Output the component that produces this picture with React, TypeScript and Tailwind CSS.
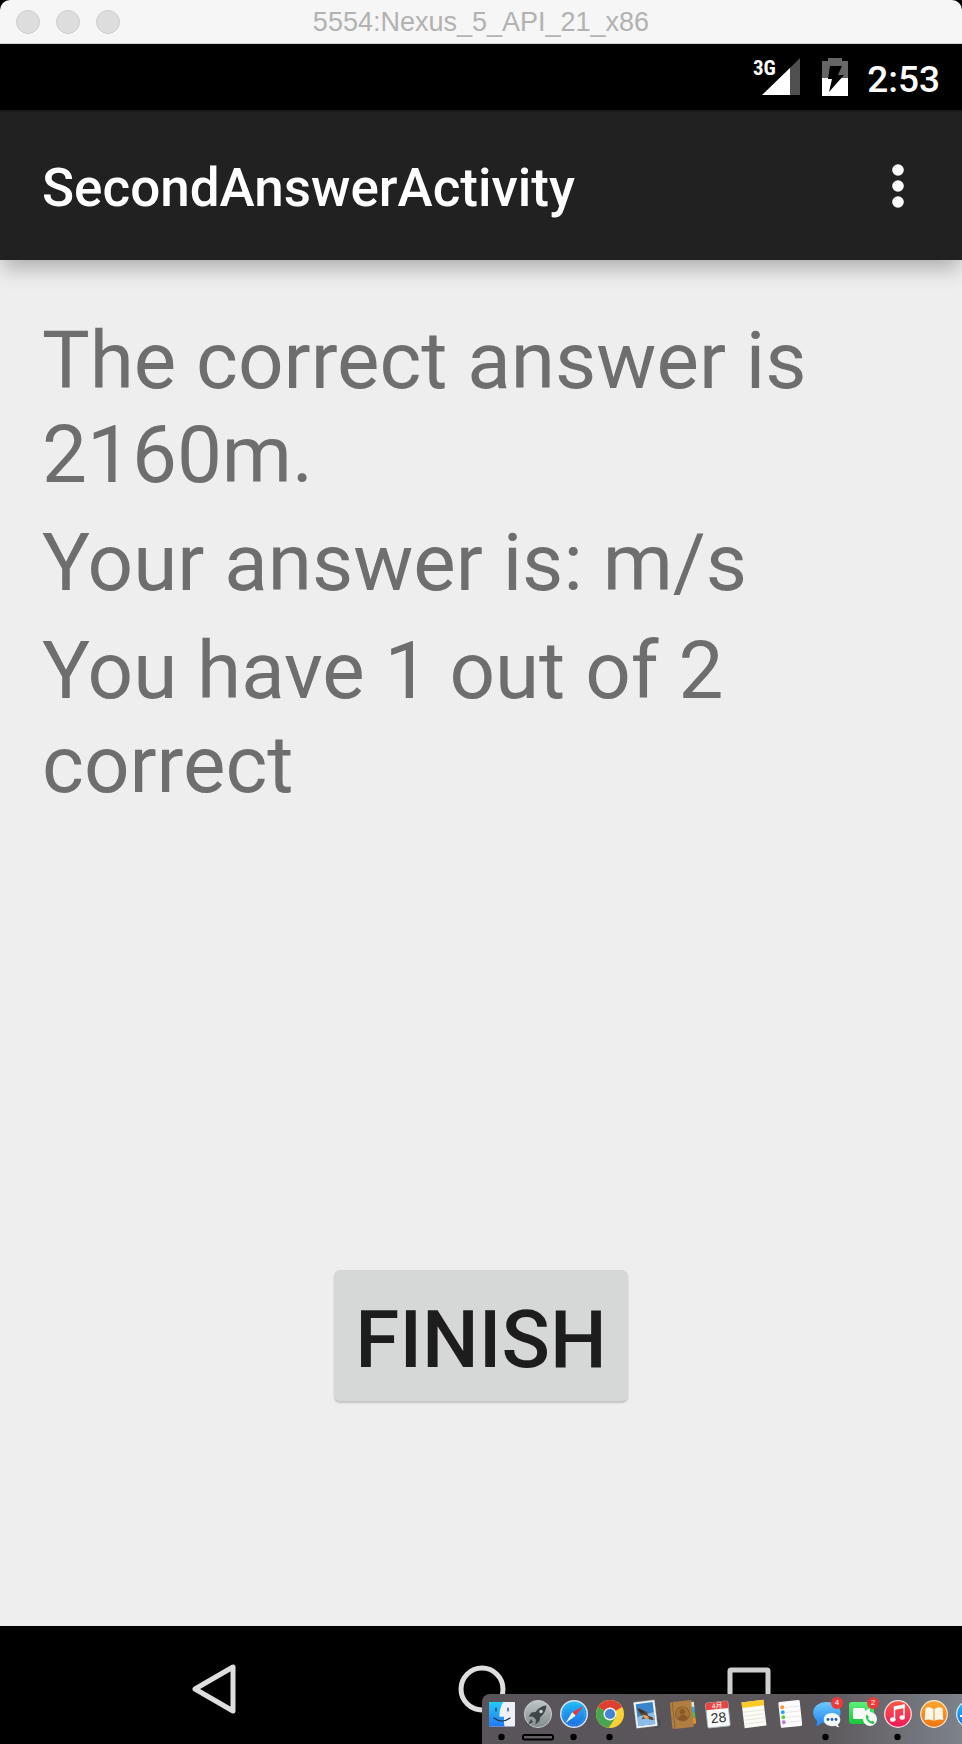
import React from "react";

function Dot({ on }: { on?: boolean }) {
  return on ? <circle cx="17.500" cy="43" r="3.200" fill="#000" /> : null;
}

function DockItem({ label, running, children }: { label: string; running?: boolean; children: React.ReactNode }) {
  return (
    <a href="#" aria-label={label} className="block h-[50px] w-9 shrink-0">
      <svg viewBox="0 0 36 50" className="block h-[50px] w-9 overflow-visible">
        {children}
        <Dot on={running} />
      </svg>
    </a>
  );
}

function Badge({ count }: { count: number }) {
  return (
    <span className="absolute top-[3px] left-[23px] flex h-3 w-3 items-center justify-center rounded-full bg-[#ee3b3a] text-[8px] leading-none text-white">
      {count}
    </span>
  );
}

function Dock() {
  return (
    <nav
      aria-label="Dock"
      className="absolute right-0 bottom-0 left-1/2 ml-px flex h-[50px] overflow-hidden rounded-tl-lg bg-linear-to-r from-[#58545a] via-[#5b575a] via-70% to-[#7d828b] pl-[2px] font-['Liberation_Sans',sans-serif]"
    >
      <svg width="0" height="0" className="absolute" aria-hidden="true">
        <defs>
          <linearGradient id="finder" x2="0" y2="1"><stop stopColor="#25cbfb" /><stop offset="1" stopColor="#2378f2" /></linearGradient>
          <linearGradient id="steel" x2="0" y2="1"><stop stopColor="#bcc6c8" /><stop offset="1" stopColor="#828a8b" /></linearGradient>
          <linearGradient id="blue" x2="0" y2="1"><stop stopColor="#1fc0f8" /><stop offset="1" stopColor="#1b68e0" /></linearGradient>
          <linearGradient id="bubble" x2="0" y2="1"><stop stopColor="#6fc8fb" /><stop offset="1" stopColor="#1d84f5" /></linearGradient>
          <linearGradient id="green" x2="0" y2="1"><stop stopColor="#5cf078" /><stop offset="1" stopColor="#18c73c" /></linearGradient>
          <linearGradient id="music" x2="0" y2="1"><stop stopColor="#fb5a45" /><stop offset="1" stopColor="#f0185c" /></linearGradient>
          <linearGradient id="books" x2="0" y2="1"><stop stopColor="#fca631" /><stop offset="1" stopColor="#ee7512" /></linearGradient>
        </defs>
      </svg>
      <DockItem label="Finder" running>
        <rect x="5" y="8" width="26" height="24.500" rx="1" fill="#eef1fa" />
        <path d="M5 9q0-1 1-1h14q-4 6-4 14h4q-.5 5 .5 10.500H6q-1 0-1-1z" fill="url(#finder)" />
        <path d="M12 14v3M24 14v3M10 24q8 6 16 0" fill="none" stroke="#17304e" strokeWidth="1.200" strokeLinecap="round" />
        <path d="M20 8q-4 6-4 14h4" fill="none" stroke="#eef1fa" strokeWidth="1.300" />
      </DockItem>
      <DockItem label="Launchpad">
        <circle cx="18" cy="20" r="13.600" fill="url(#steel)" stroke="#d5dada" strokeWidth=".8" />
        <path d="M26.500 11.500q-7 .5-11 6.500l-4 .5-3 4 4.500.2 3 3-.5 4.800 4-3.300.7-4q5.500-4 6.300-11.700zM11 25l-2.800 5.500L13 28z" fill="#40474b" />
        <circle cx="21" cy="17.500" r="1.800" fill="#c5cdd0" />
        <rect x="3" y="41" width="30" height="4.400" rx="1.500" fill="#635f63" stroke="#000" strokeWidth="2" />
      </DockItem>
      <DockItem label="Safari" running>
        <circle cx="18" cy="20" r="13.300" fill="url(#blue)" stroke="#dfe5ec" strokeWidth="1.400" />
        <circle cx="18" cy="20" r="11" fill="none" stroke="#5fb8f4" strokeWidth="1.200" strokeDasharray=".7 1.450" />
        <path d="M27.500 12l-7.800 9.800-3.400-3.500z" fill="#f2333c" />
        <path d="M9.500 29l6.800-10.700 3.400 3.500z" fill="#f3f5f8" />
      </DockItem>
      <DockItem label="Chrome" running>
        <circle cx="18" cy="20" r="14" fill="#fdd033" />
        <path d="M18 20L5.900 13A14 14 0 0 1 30.100 13z" fill="#dd4033" />
        <path d="M5.900 13A14 14 0 0 0 16.500 34L24 23l-6-3z" fill="#49a552" />
        <circle cx="18" cy="20" r="6.500" fill="#f4f5f5" />
        <circle cx="18" cy="20" r="5.100" fill="#4685d4" />
      </DockItem>
      <DockItem label="Mail">
        <circle cx="28" cy="29" r="5" fill="#454850" opacity=".6" />
        <g transform="rotate(-7 18 20)">
          <rect x="7" y="7" width="21" height="26" fill="#eff3f6" stroke="#d6dadd" strokeWidth=".6" strokeDasharray="1 1" />
          <rect x="9" y="9" width="17" height="22" fill="#3b83cc" />
          <path d="M9 22l17-3v12H9z" fill="#8dbde8" />
          <path d="M10 13q1 6 5 9l-2 3 5-1 3 2 4 1-1-3-4-2-1-4-5-3z" fill="#60422c" />
          <path d="M14 20l5 2 2 3-5-1z" fill="#d8ad63" />
          <path d="M10 13l5 3 2 3-4-1z" fill="#30302f" />
        </g>
      </DockItem>
      <DockItem label="Contacts">
        <g transform="rotate(-6 18 20)">
          <path d="M27 9h4v6h-4z" fill="#e7e6dd" /><path d="M27 14h4v5h-4z" fill="#42a9d7" /><path d="M27 19h4v6h-4z" fill="#52b755" /><path d="M27 25h4v6h-4z" fill="#ef9124" />
          <rect x="7" y="7" width="21.500" height="27" rx="1.500" fill="#b07d42" />
          <path d="M9.500 7v27" stroke="#946530" />
          <circle cx="18.500" cy="20" r="7" fill="#a67439" stroke="#8e602e" />
          <circle cx="18.500" cy="18" r="2.700" fill="#85592a" />
          <path d="M13.500 24.500q1-3.500 5-3.500t5 3.500q-5 4-10 0z" fill="#85592a" />
        </g>
      </DockItem>
      <DockItem label="Calendar">
        <g transform="rotate(-6 18 20)">
          <rect x="6.500" y="8" width="22.500" height="25" rx="1.500" fill="#fafafa" stroke="#a8b4b8" strokeWidth=".8" />
          <path d="M6.500 9.500Q6.500 8 8 8h19.500Q29 8 29 9.500V15H6.500z" fill="#e24542" />
          <text x="18" y="14" textAnchor="middle" fontSize="7" fill="#fff" fontFamily="'Liberation Sans','Noto Sans CJK JP',sans-serif">4月</text>
          <text x="18" y="28.500" textAnchor="middle" fontSize="14" fill="#333" fontFamily="'Liberation Sans',sans-serif">28</text>
        </g>
      </DockItem>
      <DockItem label="Notes">
        <g transform="rotate(-7 18 20)">
          <rect x="7" y="7" width="22" height="26" fill="#fcfbf6" />
          <path d="M7 7h22v5.500H7z" fill="#fbc928" />
          <path d="M8 17h20M8 21h20M8 25h20M8 29h20" stroke="#deddd6" strokeWidth=".7" />
        </g>
      </DockItem>
      <DockItem label="Reminders">
        <g transform="rotate(-6 18 20)">
          <rect x="7.500" y="7" width="21.500" height="26" rx="1.500" fill="#fcfcfc" />
          <path d="M14 13h14M14 18h14M14 23h14M14 28h14" stroke="#dedee0" strokeWidth=".7" />
          <circle cx="11" cy="12.500" r="2" fill="#fa942c" /><circle cx="11" cy="17.500" r="2" fill="#28a5f4" /><circle cx="11" cy="22.500" r="2" fill="#64cd32" /><circle cx="11" cy="27.500" r="2" fill="#c573df" />
        </g>
      </DockItem>
      <div className="relative">
        <DockItem label="Messages" running>
          <path d="M19 8c8 0 13.500 4.500 13.500 10.500S27 29 19 29q-3 0-5-.5-3 3.500-6.500 3.500 2-2 1.500-5.500-3.800-3-3.800-8C5.200 12.500 11 8 19 8z" fill="url(#bubble)" />
          <path d="M24 19c5 0 8.300 3 8.300 6.600 0 2.500-1 4-2.500 5 .2 1.400.7 2 1.700 2.700q-2.500 0-4-1.500-1.500.4-3.500.4c-5 0-8.200-2.800-8.200-6.600S19 19 24 19z" fill="#f3f8fb" />
          <circle cx="20" cy="25.500" r="1.400" fill="#275f9f" /><circle cx="24" cy="25.500" r="1.400" fill="#275f9f" /><circle cx="28" cy="25.500" r="1.400" fill="#275f9f" />
        </DockItem>
        <Badge count={4} />
      </div>
      <div className="relative">
        <DockItem label="FaceTime">
          <rect x="5" y="8" width="25" height="22" rx="3" fill="url(#green)" />
          <path d="M9 15.500q0-1.500 1.500-1.500h9q1.500 0 1.500 1.500v1.500l5-3v11H10.500Q9 25 9 23.500z" fill="#f8faf8" />
          <circle cx="26" cy="25" r="7" fill="#f4f7f4" />
          <path d="M23 20.500l1.800 2.500-.8 1.500q1.200 2.200 3 3l1.600-.8 2 1.700q-1 2-2.800 1.400-5-1.600-6-7 .2-1.500 1.200-2.300z" fill="#28c549" />
        </DockItem>
        <Badge count={2} />
      </div>
      <DockItem label="Music" running>
        <circle cx="18" cy="20" r="13.300" fill="url(#music)" stroke="#f6e6e5" strokeWidth="1.200" />
        <path d="M14.500 24.500V13.200l9.500-2v11.300" fill="none" stroke="#fff" strokeWidth="1.500" /><path d="M14 12.700l10.700-2.200v3.400L14 16z" fill="#fff" />
        <ellipse cx="12.800" cy="25.500" rx="2.800" ry="2.200" fill="#fff" /><ellipse cx="22.200" cy="23.500" rx="2.700" ry="2.200" fill="#fff" />
      </DockItem>
      <DockItem label="Books">
        <circle cx="18" cy="20" r="13.300" fill="url(#books)" stroke="#f7e7d2" strokeWidth="1.200" />
        <path d="M17.500 15q-4-3-8-1l-.8 12q4.500-1.500 8.800.8zM18.500 15q4-3 8-1l.8 12q-4.500-1.500-8.800.8z" fill="#fff6e7" />
      </DockItem>
      <DockItem label="App Store">
        <circle cx="18" cy="20" r="13.300" fill="url(#blue)" stroke="#e3edf5" strokeWidth="1.200" />
        <path d="M19 12l-7 13M17 12l7 13M8 22h20" stroke="#fff" strokeWidth="2" />
      </DockItem>
    </nav>
  );
}

export default function App() {
  return (
    <div className="relative flex min-h-screen flex-col overflow-hidden bg-black font-['Roboto',sans-serif]">
      <header className="relative flex h-11 items-center justify-center rounded-t-[10px] border-b border-[#d2d2d2] bg-[#f6f6f6]">
        <div className="absolute left-4 flex gap-4">
          {["Close", "Minimize", "Zoom"].map((n) => (
            <button key={n} aria-label={n} className="h-6 w-6 rounded-full border border-[#cecece] bg-[#dddddd]" />
          ))}
        </div>
        <h1 className="pt-px font-['Liberation_Sans',sans-serif] text-[27px] leading-8 text-[#b2b2b2]">5554:Nexus_5_API_21_x86</h1>
      </header>

      <div className="flex h-[66px] items-center justify-end pr-[22px] text-white">
        <svg viewBox="0 0 48 40" className="h-10 w-12" role="img" aria-label="3G signal">
          <path d="M47 1v37H10z" fill="#505050" />
          <path d="M37 11v27H9z" fill="#fff" />
          <text x="0" y="18" fontSize="21" fontWeight="700" fill="#fff" fontFamily="'Roboto Condensed','Liberation Sans Narrow',Roboto,sans-serif">3G</text>
        </svg>
        <svg viewBox="0 0 26 38" className="ml-[21px] h-[38px] w-[26px]" role="img" aria-label="Battery charging">
          <path d="M6 0h14v3h6v18H0V3h6z" fill="#666" />
          <path d="M0 20h26v18H0z" fill="#fff" />
          <path d="M8 8h12l-4 9h6L7 34l3-13H6z" fill="#000" />
        </svg>
        <span className="mt-1.5 ml-[19px] text-[37px] leading-[44px] font-medium">2:53</span>
      </div>

      <div className="relative z-10 flex h-[150px] items-center justify-between border-t-2 border-[#1a1a1a] bg-[#212121] pr-11 pl-[42px] shadow-[0_10px_20px_-2px_rgba(0,0,0,0.28)]">
        <h2 className="pt-1 text-[53px] leading-[62px] font-medium text-white">SecondAnswerActivity</h2>
        <button aria-label="More options" className="flex w-10 justify-center">
          <svg viewBox="0 0 12 44" className="h-11 w-3" fill="#fff">
            <circle cx="6" cy="6" r="5.800" /><circle cx="6" cy="22" r="5.800" /><circle cx="6" cy="38" r="5.800" />
          </svg>
        </button>
      </div>

      <main className="flex flex-1 flex-col items-center bg-[#eeeeee] px-[42px] pt-[54px] pb-[225px]">
        <div className="flex w-full flex-col gap-[14px] text-[80px] leading-[94px] text-[#6e6e6e]">
          <p>The correct answer is 2160m.</p>
          <p>Your answer is: m/s</p>
          <p>You have 1 out of 2 correct</p>
        </div>
        <button className="mt-auto flex h-[131px] w-[294px] items-center justify-center rounded-[6px] bg-[#d6d8d7] pt-2 text-[80px] leading-[94px] font-medium text-[#1d1d1d] shadow-[0_2px_2px_rgba(0,0,0,0.18)]">
          FINISH
        </button>
      </main>

      <nav aria-label="System" className="flex h-[118px] items-center justify-center gap-[221px] pt-2">
        <button aria-label="Back">
          <svg viewBox="0 0 46 52" className="h-[52px] w-[46px]" fill="none" stroke="#dedede" strokeWidth="5" strokeLinejoin="round"><path d="M42 4v44L4 26z" /></svg>
        </button>
        <button aria-label="Home">
          <svg viewBox="0 0 48 48" className="h-12 w-12" fill="none" stroke="#dedede" strokeWidth="5"><circle cx="24" cy="24" r="21" /></svg>
        </button>
        <button aria-label="Overview">
          <svg viewBox="0 0 44 44" className="h-11 w-11" fill="none" stroke="#cfcfcf" strokeWidth="5"><rect x="3" y="3" width="38" height="38" rx="1" /></svg>
        </button>
      </nav>
      <Dock />
    </div>
  );
}
